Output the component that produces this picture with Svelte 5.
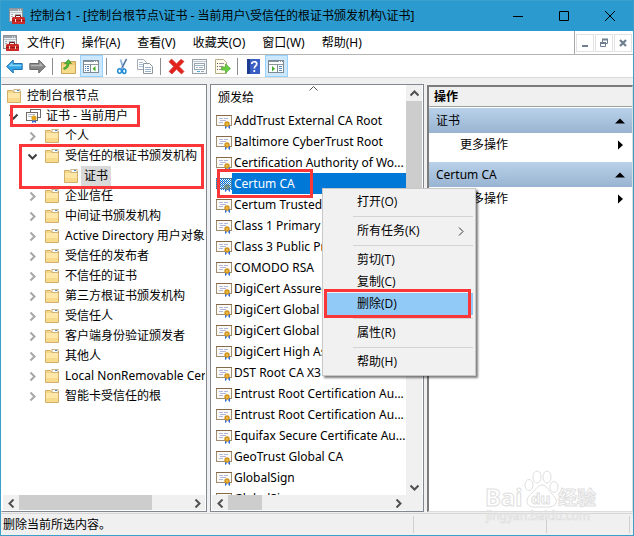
<script lang="ts">
  type TreeNode = {
    label: string;
    open?: boolean;
    leaf?: boolean;
    icon?: string;
    selected?: boolean;
    mark?: 'row' | 'branch';
    children?: TreeNode[];
  };

  const menus = ['文件(F)', '操作(A)', '查看(V)', '收藏夹(O)', '窗口(W)', '帮助(H)'];

  const tools = [
    [
      { icon: 'back', label: '后退' },
      { icon: 'forward', label: '前进' },
    ],
    [
      { icon: 'up', label: '上一级' },
      { icon: 'tree', label: '显示/隐藏控制台树', active: true },
    ],
    [
      { icon: 'cut', label: '剪切' },
      { icon: 'copy', label: '复制' },
    ],
    [
      { icon: 'delete', label: '删除' },
      { icon: 'props', label: '属性' },
      { icon: 'export', label: '导出列表' },
    ],
    [
      { icon: 'help', label: '帮助' },
      { icon: 'pane', label: '显示/隐藏操作窗格', active: true },
    ],
  ];

  const tree: TreeNode[] = [
    {
      label: '证书 - 当前用户',
      open: true,
      icon: 'store',
      mark: 'row',
      children: [
        { label: '个人' },
        {
          label: '受信任的根证书颁发机构',
          open: true,
          mark: 'branch',
          children: [{ label: '证书', leaf: true, selected: true }],
        },
        { label: '企业信任' },
        { label: '中间证书颁发机构' },
        { label: 'Active Directory 用户对象' },
        { label: '受信任的发布者' },
        { label: '不信任的证书' },
        { label: '第三方根证书颁发机构' },
        { label: '受信任人' },
        { label: '客户端身份验证颁发者' },
        { label: '其他人' },
        { label: 'Local NonRemovable Certificates' },
        { label: '智能卡受信任的根' },
      ],
    },
  ];

  const certificates = [
    'AddTrust External CA Root',
    'Baltimore CyberTrust Root',
    'Certification Authority of Wo...',
    'Certum CA',
    'Certum Trusted Network CA',
    'Class 1 Primary CA',
    'Class 3 Public Primary',
    'COMODO RSA',
    'DigiCert Assured ID',
    'DigiCert Global Root CA',
    'DigiCert Global Root G2',
    'DigiCert High Assurance',
    'DST Root CA X3',
    'Entrust Root Certification Au...',
    'Entrust Root Certification Au...',
    'Equifax Secure Certificate Au...',
    'GeoTrust Global CA',
    'GlobalSign',
    'GlobalSign',
  ];

  const contextGroups = [
    [{ label: '打开(O)' }],
    [{ label: '所有任务(K)', submenu: true }],
    [{ label: '剪切(T)' }, { label: '复制(C)' }, { label: '删除(D)' }],
    [{ label: '属性(R)' }],
    [{ label: '帮助(H)' }],
  ];

  let selected = $state(3);
  let hot = $state('删除(D)');
</script>

{#snippet consoleIcon()}
  <svg class="app-icon" width="16" height="16" viewBox="0 0 16 16" aria-hidden="true">
    <rect x="0.5" y="0.5" width="13" height="13" fill="#eef1f3" stroke="#8b9298" />
    <rect x="1" y="1" width="12" height="2" fill="#9aa3ab" />
    <path d="M9 2h1M11 2h1" stroke="#fff" />
    <path d="M1 4.500h12" stroke="#b9c0c6" />
    <path d="M2 6.500h2M2 8.500h2M6 6.500h6" stroke="#a7afb6" />
    <path d="M6.500 9V7.500h5V9" fill="none" stroke="#6b1614" />
    <path d="M3 10l1-1h11l1 1v6H3z" fill="#cc2b28" />
    <path d="M3 12.500h13" stroke="#981614" />
    <path d="M6.500 11v3M12.500 11v3" stroke="#f1d8d5" />
  </svg>
{/snippet}

{#snippet folder()}
  <svg width="14" height="14" viewBox="0 0 14 14" aria-hidden="true">
    <path d="M0.500 1.500h5l1 1h7v11h-13z" fill="#f3d68a" stroke="#d2b06a" />
    <rect x="7" y="0.500" width="6" height="3" fill="#fff" stroke="#b99d5f" stroke-width="0.700" />
    <rect x="10" y="1" width="2" height="1" fill="#3c8ad8" />
    <path d="M1 4h12v5H1z" fill="#fde6a6" />
    <path d="M1 9h12v4H1z" fill="#f8da8c" />
  </svg>
{/snippet}

{#snippet certIcon(ghost: boolean)}
  <svg class="cert-icon" width="16" height="16" viewBox="0 0 16 16" aria-hidden="true">
    {#if ghost}
      <defs>
        <pattern id="dither" width="2" height="2" patternUnits="userSpaceOnUse">
          <path d="M0 0h1v1H0zM1 1h1v1H1z" fill="#0078d7" />
        </pattern>
      </defs>
    {/if}
    <rect x="0.500" y="2.500" width="15" height="10" fill="#fbfaf5" stroke="#a08c70" />
    <path d="M0 2.500h16" stroke="#85694a" />
    <path d="M3 5.500h4M8 5.500h4M4 7.500h6M3 9.500h4" stroke="#b3b7de" />
    <path d="M9 12v4l1.500-1L11 12zM12 12l.5 3 1.500 1v-4z" fill="#2f6ad6" />
    <circle cx="11" cy="11" r="2.700" fill="#d2951f" />
    <circle cx="11" cy="11" r="1" fill="#f1c850" />
    {#if ghost}<rect width="16" height="12" y="2" fill="url(#dither)" />{/if}
  </svg>
{/snippet}

{#snippet storeIcon()}
  <svg width="15" height="14" viewBox="0 0 15 14" aria-hidden="true">
    <rect x="4.500" y="0.500" width="10" height="8" fill="#fff" stroke="#6d6a66" />
    <rect x="0.500" y="3.500" width="11" height="8" fill="#fff" stroke="#6d6a66" />
    <path d="M2 5.500h7M2 7.500h4" stroke="#b5b9cc" />
    <path d="M6 10v4l2-1 2 1v-4z" fill="#2f6ad6" />
    <circle cx="8" cy="9" r="2.600" fill="#e0a41f" />
  </svg>
{/snippet}

{#snippet toolIcon(name: string)}
  <svg width="17" height="17" viewBox="0 0 17 17" aria-hidden="true">
    {#if name === 'back'}
      <path d="M0.700 8.500 7.200 2v3.500h9v6h-9V15z" fill="#2fa5e8" stroke="#256fae" stroke-linejoin="round" />
      <path d="M2.500 8.200 6.300 4.500v2.300h9v1.400z" fill="#8bd2f8" />
    {:else if name === 'forward'}
      <path d="M16.300 8.500 9.800 2v3.500h-9v6h9V15z" fill="#858585" stroke="#686868" stroke-linejoin="round" />
      <path d="M14.500 8.200 10.700 4.500v2.300h-9v1.400z" fill="#b5b5b5" />
    {:else if name === 'up'}
      <path d="M1.500 4.500h5l1-1h8v12h-14z" fill="#efc973" stroke="#c9a65c" />
      <path d="M2 7h13v8H2z" fill="#f8dc8d" />
      <path d="M4 11.500C7 11 9 9 9 5.500h2.500L8.500 1.500 4.500 5.500H7C7 8 6 9 3.500 10z" fill="#51b83a" stroke="#318b23" stroke-width="0.600" />
    {:else if name === 'tree' || name === 'pane'}
      <rect x="0.500" y="2.500" width="15" height="12" fill="#fff" stroke="#7f8992" />
      <path d="M1 3h14v1H1z" fill="#87929b" />
      <path d="M11 3.500h1M13 3.500h1" stroke="#fff" />
      <path d="M1 6.500h14" stroke="#8e98a1" />
      {#if name === 'tree'}
        <path d="M7.500 7v7" stroke="#7f8992" />
        <path d="M2 8.500h1M4 8.500h2M2 10.500h1M4 10.500h2M2 12.500h1M4 12.500h2" stroke="#5b86b5" />
        <path d="M12.500 8v5.500L9.500 10.700z" fill="#43ad2a" />
      {:else}
        <path d="M9.500 7v7" stroke="#7f8992" />
        <path d="M11 8.500h3M11 10.500h3M11 12.500h3" stroke="#5b86b5" />
        <path d="M4 8v5.500L7 10.700z" fill="#43ad2a" />
      {/if}
    {:else if name === 'cut'}
      <path d="M6.500 1.500l3 9.500M12.500 1 7.500 11" stroke="#8fb2da" stroke-width="1.800" fill="none" />
      <path d="M12.500 1 8 9.500" stroke="#41597d" stroke-width="0.900" />
      <ellipse cx="5.600" cy="13" rx="1.900" ry="2.300" fill="none" stroke="#1e8bd8" stroke-width="1.500" />
      <ellipse cx="10.200" cy="13.300" rx="1.700" ry="2.200" fill="none" stroke="#1e8bd8" stroke-width="1.500" />
    {:else if name === 'copy'}
      <path d="M0.500 1.500h6l3 3v7h-9z" fill="#fff" stroke="#a4adb5" />
      <path d="M2 4.500h4M2 6.500h5M2 8.500h5" stroke="#a9bfd6" />
      <path d="M6.500 5.500h6l3 3v7h-9z" fill="#fff" stroke="#8b959e" />
      <path d="M8 9.500h6M8 11.500h6M8 13.500h6" stroke="#9ab2cb" />
    {:else if name === 'delete'}
      <path d="M3.500 1 8.500 5.800 13 1.300 16 3.500 11.200 8.500 16 13.500 13.500 16 8.500 11.300 4 16 1 13.500 5.700 8.500 1 3.800z" fill="#e3221b" stroke="#c93a33" stroke-width="0.700" />
    {:else if name === 'props'}
      <rect x="1.500" y="1.500" width="14" height="14" fill="#f8f9fa" stroke="#98a1a9" />
      <path d="M2 3.500h13" stroke="#bfc6cc" />
      <rect x="3.500" y="5.500" width="10" height="6" fill="#fff" stroke="#9aa5af" />
      <path d="M4 7.500h9M5 9.500h2M8 9.500h4" stroke="#9cb1c6" />
      <path d="M6 13.500h3" stroke="#48acd7" />
      <path d="M10 13.500h3" stroke="#9aa5af" />
    {:else if name === 'export'}
      <path d="M1.500 1.500h8l3 3v11h-11z" fill="#fffbe8" stroke="#b5ac88" />
      <path d="M3 5.500h1M3 8.500h1M3 11.500h1" stroke="#555" />
      <path d="M5 5.500h5M5 8.500h4M5 11.500h4" stroke="#a08e9e" />
      <path d="M7.500 9h4V6l5 4.500-5 4.500v-3h-4z" fill="#6ace43" stroke="#4aa52f" stroke-width="0.700" />
    {:else if name === 'help'}
      <rect x="2" y="1" width="13" height="15" fill="#3a5fc4" />
      <path d="M2 1h3v15H2z" fill="#1b3a90" />
      <path d="M6.800 6c0-3 5-3 5-.2C11.800 8 9.300 8 9.300 10.600M9.300 12v2" fill="none" stroke="#fff" stroke-width="1.700" />
    {/if}
  </svg>
{/snippet}

{#snippet chevron(dir: string)}
  <svg class="chevron {dir}" width="9" height="9" viewBox="0 0 9 9" aria-hidden="true">
    <path d="M2.500 0.500l4 4-4 4" fill="none" stroke="currentColor" stroke-width="2" />
  </svg>
{/snippet}

{#snippet treeRow(node: TreeNode)}
  <div class="tree-row">
    <span class="toggle" class:open={node.open}>
      {#if !node.leaf}{@render chevron(node.open ? 'down' : 'right')}{/if}
    </span>
    <span class="tree-icon">
      {#if node.icon === 'store'}{@render storeIcon()}{:else}{@render folder()}{/if}
    </span>
    <span class="tree-label" class:selected={node.selected}>{node.label}</span>
    {#if node.mark === 'row'}<span class="mark mark-row"></span>{/if}
  </div>
{/snippet}

{#snippet branch(nodes: TreeNode[])}
  <ul class="branch">
    {#each nodes as node}
      <li>
        {@render treeRow(node)}
        {#if node.children}{@render branch(node.children)}{/if}
        {#if node.mark === 'branch'}<span class="mark mark-branch"></span>{/if}
      </li>
    {/each}
  </ul>
{/snippet}

<div class="window">
  <header class="titlebar">
    {@render consoleIcon()}
    <span class="title">控制台1 - [控制台根节点\证书 - 当前用户\受信任的根证书颁发机构\证书]</span>
    <div class="caption">
      <button type="button" aria-label="最小化">
        <svg width="10" height="10" viewBox="0 0 10 10"><path d="M0 5.500h10" stroke="#000" /></svg>
      </button>
      <button type="button" aria-label="最大化">
        <svg width="10" height="10" viewBox="0 0 10 10"><path d="M0.500 0.500h9v9h-9z" fill="none" stroke="#000" /></svg>
      </button>
      <button type="button" aria-label="关闭">
        <svg width="10" height="10" viewBox="0 0 10 10"><path d="M0 0l10 10M10 0L0 10" stroke="#000" /></svg>
      </button>
    </div>
  </header>

  <nav class="menubar">
    {@render consoleIcon()}
    {#each menus as menu}
      <button type="button" class="menu">{menu}</button>
    {/each}
    <div class="mdi">
      <button type="button" aria-label="最小化子窗口">
        <svg width="10" height="10" viewBox="0 0 10 10"><path d="M2 8h6" stroke="#6f7f8f" stroke-width="2" /></svg>
      </button>
      <button type="button" aria-label="还原子窗口">
        <svg width="10" height="10" viewBox="0 0 10 10">
          <path d="M3.500 4V1.500h5v4H7" fill="none" stroke="#6f7f8f" />
          <path d="M3 1.500h6" stroke="#6f7f8f" stroke-width="2" />
          <path d="M1.500 4.500h5v4h-5z" fill="none" stroke="#6f7f8f" />
          <path d="M1 5h6" stroke="#6f7f8f" stroke-width="2" />
        </svg>
      </button>
      <button type="button" aria-label="关闭子窗口">
        <svg width="10" height="10" viewBox="0 0 10 10"><path d="M2 2l6 6M8 2L2 8" stroke="#6f7f8f" stroke-width="2.200" /></svg>
      </button>
    </div>
  </nav>

  <div class="toolbar">
    {#each tools as group}
      <div class="tool-group">
        {#each group as tool}
          <button type="button" class:active={tool.active} aria-label={tool.label}>
            {@render toolIcon(tool.icon)}
          </button>
        {/each}
      </div>
    {/each}
  </div>

  <main class="work">
    <section class="pane tree-pane">
      <div class="tree">
        <div class="tree-row root">
          <span class="tree-icon">{@render folder()}</span>
          <span class="tree-label">控制台根节点</span>
        </div>
        {@render branch(tree)}
      </div>
      <div class="scroll-x">
        <button type="button" aria-label="向左滚动">{@render chevron('left')}</button>
        <div class="track"><div class="thumb tree-thumb"></div></div>
        <button type="button" aria-label="向右滚动">{@render chevron('right')}</button>
      </div>
    </section>

    <section class="pane list-pane">
      <div class="list">
        <table>
          <thead>
            <tr>
              <th scope="col">
                颁发给
                <svg class="sort" width="9" height="5" viewBox="0 0 9 5" aria-hidden="true">
                  <path d="M0.500 4.500l4-4 4 4" fill="none" stroke="#555" />
                </svg>
              </th>
            </tr>
          </thead>
          <tbody>
            {#each certificates as cert, i}
              <tr class:selected={selected === i} onclick={() => (selected = i)}>
                <td>
                  <div class="cert">
                    {@render certIcon(selected === i)}
                    <span class="cert-name">{cert}</span>
                    {#if selected === i}<span class="mark mark-cert"></span>{/if}
                  </div>
                </td>
              </tr>
            {/each}
          </tbody>
        </table>
      </div>
      <div class="scroll-y">
        <button type="button" aria-label="向上滚动">{@render chevron('up')}</button>
        <div class="track"><div class="thumb"></div></div>
        <button type="button" aria-label="向下滚动">{@render chevron('down')}</button>
      </div>
      <div class="scroll-x">
        <button type="button" aria-label="向左滚动">{@render chevron('left')}</button>
        <div class="track"><div class="thumb list-thumb"></div></div>
        <button type="button" aria-label="向右滚动">{@render chevron('right')}</button>
      </div>
    </section>

    <aside class="actions">
      <h2>操作</h2>
      {#each ['证书', 'Certum CA'] as group}
        <div class="action-group">
          <button type="button" class="group-head">
            {group}
            <svg width="10" height="6" viewBox="0 0 10 6" aria-hidden="true"><path d="M0 5.500L5 0.500l5 5z" /></svg>
          </button>
          <button type="button" class="action">
            更多操作
            <svg width="10" height="10" viewBox="0 0 10 10" aria-hidden="true"><path d="M3 0.500v9L8 5z" /></svg>
          </button>
        </div>
      {/each}
    </aside>

    <div class="context" role="menu">
      {#each contextGroups as group}
        <div class="context-group">
          {#each group as item}
            <button
              type="button"
              role="menuitem"
              class:hot={hot === item.label}
              onmouseenter={() => (hot = item.label)}
            >
              {item.label}
              {#if item.submenu}
                <svg width="6" height="9" viewBox="0 0 6 9" aria-hidden="true">
                  <path d="M1 0.500l4 4-4 4" fill="none" stroke="#333" />
                </svg>
              {/if}
              {#if item.label === '删除(D)'}<span class="mark mark-item"></span>{/if}
            </button>
          {/each}
        </div>
      {/each}
    </div>
  </main>

  <footer class="status">
    <span class="status-text">删除当前所选内容。</span>
    <span class="status-cell"></span>
    <span class="status-cell"></span>
  </footer>

  <svg class="watermark" width="136" height="58" viewBox="0 0 136 58">
    <g fill="#fff" stroke="#dcdcdc">
      <text x="0" y="38" font-size="24" font-weight="700">Bai</text>
      <ellipse cx="44" cy="17" rx="4" ry="5.500" />
      <ellipse cx="52" cy="9" rx="4" ry="6" />
      <ellipse cx="62" cy="9" rx="4" ry="6" />
      <ellipse cx="69" cy="19" rx="4" ry="5.500" />
      <path d="M57 17c5 0 6 5 10 9s5 6 4 9-5 4-8 4H49c-4 0-7-2-7-6s3-6 6-9 5-7 9-7z" />
      <text x="46" y="36" font-size="15" font-weight="700">du</text>
      <text x="73" y="37" font-size="19" font-weight="700">经验</text>
      <text x="1" y="52" font-size="12" stroke-width="0.700">jingyan.baidu.com</text>
    </g>
  </svg>
</div>

<style>
  :global(body) {
    margin: 0;
  }

  .window {
    position: relative;
    box-sizing: border-box;
    display: flex;
    flex-direction: column;
    height: 100vh;
    border: 1px solid #3a9fc9;
    background: #f0f0f0;
    color: #000;
    font: 12px/20px 'Noto Sans', 'Noto Sans CJK SC', sans-serif;
    overflow: hidden;
  }

  button {
    display: flex;
    align-items: center;
    padding: 0;
    border: 0;
    background: none;
    color: inherit;
    font: inherit;
    white-space: nowrap;
  }

  svg {
    display: block;
    flex: none;
  }

  .titlebar {
    display: flex;
    align-items: center;
    flex: none;
    height: 30px;
    padding-left: 8px;
    background: #2b9bcf;
  }

  .title {
    flex: 1;
    min-width: 0;
    margin-left: 5px;
    overflow: hidden;
    white-space: nowrap;
  }

  .caption {
    display: flex;
    height: 100%;
  }

  .caption button {
    justify-content: center;
    width: 46px;
  }

  .menubar {
    display: flex;
    align-items: center;
    flex: none;
    gap: 17px;
    height: 23px;
    padding-left: 2px;
    border-bottom: 1px solid #b4b4b4;
    background: #fff;
  }

  .menubar .app-icon {
    margin-right: -9px;
  }

  .mdi {
    display: flex;
    align-items: center;
    align-self: stretch;
    gap: 1px;
    margin-left: auto;
    padding: 0 1px;
    border-left: 1px solid #a8a8a8;
  }

  .mdi button {
    box-sizing: border-box;
    justify-content: center;
    width: 18px;
    height: 18px;
    border: 1px solid #e2e2e2;
  }

  .toolbar {
    display: flex;
    flex: none;
    height: 22px;
    padding-left: 2px;
    border-bottom: 1px solid #dadada;
    background: #fff;
  }

  .tool-group {
    display: flex;
  }

  .tool-group + .tool-group::before {
    content: '';
    width: 1px;
    margin: 3px 4px 2px 3px;
    background: #8d8d8d;
  }

  .toolbar button {
    box-sizing: border-box;
    justify-content: center;
    width: 23px;
    height: 22px;
    border: 1px solid transparent;
  }

  .toolbar .active {
    border-color: #99d1ff;
    background: #cce8ff;
  }

  .work {
    position: relative;
    display: grid;
    grid-template-columns: 206fr 214fr 206fr;
    gap: 3px;
    flex: 1;
    min-height: 0;
    padding: 6px 0 0;
  }

  .pane {
    box-sizing: border-box;
    min-width: 0;
    min-height: 0;
    border: 1px solid #828790;
    background: #fff;
  }

  .tree-pane {
    display: flex;
    flex-direction: column;
    padding: 1px;
    border-left-color: #fff;
  }

  .tree {
    flex: 1;
    min-height: 0;
    padding-left: 4px;
    overflow: hidden;
    white-space: nowrap;
  }

  .branch {
    margin: 0;
    padding: 0;
    list-style: none;
  }

  .branch .branch {
    padding-left: 19px;
  }

  .branch li {
    position: relative;
  }

  .tree-row {
    position: relative;
    display: flex;
    align-items: center;
    height: 20px;
  }

  .toggle {
    flex: none;
    width: 17px;
    padding-left: 2px;
    color: #a6a6a6;
  }

  .toggle.open {
    color: #404040;
  }

  .tree-icon {
    flex: none;
    width: 17px;
  }

  .tree-label {
    padding: 0 3px;
  }

  .tree-label.selected {
    background: #d9d9d9;
  }

  .chevron.down {
    transform: rotate(90deg);
  }

  .chevron.left {
    transform: rotate(180deg);
  }

  .chevron.up {
    transform: rotate(-90deg);
  }

  .scroll-x,
  .scroll-y {
    display: flex;
    background: #f0f0f0;
    color: #505050;
  }

  .scroll-x {
    height: 15px;
  }

  .scroll-y {
    flex-direction: column;
    width: 16px;
  }

  .scroll-x button,
  .scroll-y button {
    flex: none;
    justify-content: center;
    width: 16px;
    height: 16px;
  }

  .track {
    flex: 1;
    min-height: 0;
  }

  .thumb {
    height: 62%;
    background: #cdcdcd;
  }

  .tree-thumb {
    width: 78%;
    height: 100%;
  }

  .list-thumb {
    width: 21%;
    height: 100%;
  }

  .list-pane {
    display: grid;
    grid-template: minmax(0, 1fr) 15px / minmax(0, 1fr) 16px;
    padding: 0 1px 1px;
    background: linear-gradient(#f0f0f0, #f0f0f0) right bottom / 17px 16px no-repeat #fff;
  }

  .list {
    min-height: 0;
    overflow: hidden;
  }

  table {
    width: 100%;
    border-collapse: collapse;
    table-layout: fixed;
  }

  th {
    position: relative;
    height: 25px;
    padding: 0 6px;
    font-weight: 400;
    text-align: left;
  }

  .sort {
    position: absolute;
    top: 1px;
    left: 50%;
  }

  td {
    padding: 0;
  }

  .cert {
    position: relative;
    display: flex;
    align-items: center;
    height: 21px;
    padding-left: 4px;
  }

  .cert-name {
    flex: 1;
    min-width: 0;
    padding-left: 2px;
    line-height: 21px;
    overflow: hidden;
    white-space: nowrap;
  }

  tr.selected .cert-name {
    background: #0078d7;
    color: #fff;
  }

  .actions {
    box-sizing: border-box;
    min-width: 0;
    margin-top: 1px;
    border: 1px solid #dcdcdc;
    border-top: 2px solid #7c7c7c;
    border-left: 2px solid #7c7c7c;
    background: #fff;
  }

  h2 {
    margin: 0 0 1px;
    padding-left: 5px;
    border-bottom: 1px solid #a0a0a0;
    background: #f0f0f0;
    font-size: 12px;
    font-weight: 700;
    line-height: 19px;
  }

  .action-group {
    margin-bottom: 5px;
  }

  .group-head,
  .action {
    box-sizing: border-box;
    justify-content: space-between;
    width: 100%;
    padding: 0 7px;
  }

  .group-head {
    height: 25px;
    background: linear-gradient(#b9d1ea, #99b4d1);
  }

  .action {
    height: 24px;
    padding-left: 31px;
  }

  .context {
    position: absolute;
    z-index: 2;
    top: 110px;
    left: 321px;
    box-sizing: border-box;
    width: 154px;
    padding: 2px;
    border: 1px solid #c8c8c8;
    background: #f1f1f1;
    box-shadow: 2px 2px 2px rgba(0, 0, 0, 0.5);
    font-family: 'Open Sans', 'Noto Sans CJK SC', sans-serif;
  }

  .context-group + .context-group::before {
    content: '';
    display: block;
    height: 1px;
    margin: 3px 0 3px 28px;
    background: #d3d3d3;
  }

  .context button {
    position: relative;
    box-sizing: border-box;
    justify-content: space-between;
    width: 100%;
    height: 22px;
    padding: 0 9px 0 32px;
  }

  .context .hot {
    background: #91c9f7;
  }

  .mark {
    position: absolute;
    z-index: 3;
    border: 3px solid #fb3638;
    pointer-events: none;
  }

  .mark-row {
    inset: -1px auto -1px 3px;
    width: 124px;
  }

  .mark-branch {
    inset: -2px 1px -3px -7px;
  }

  .mark-cert {
    inset: -4px auto -4px 5px;
    width: 90px;
  }

  .mark-item {
    inset: -4px 2px -3px -1px;
  }

  .status {
    display: flex;
    flex: none;
    height: 21px;
    margin-top: 1px;
    padding-left: 2px;
    border-top: 1px solid #d7d7d7;
  }

  .status-text {
    flex: 1;
    line-height: 21px;
  }

  .status-cell {
    flex: 0 1 21%;
    margin: 2px 0;
    border-left: 1px solid #d0d0d0;
  }

  .status-cell + .status-cell {
    flex-basis: 13%;
    margin-right: 3px;
    border-right: 1px solid #d0d0d0;
  }

  .watermark {
    position: absolute;
    right: 12px;
    bottom: 9px;
    opacity: 0.9;
    pointer-events: none;
  }
</style>
